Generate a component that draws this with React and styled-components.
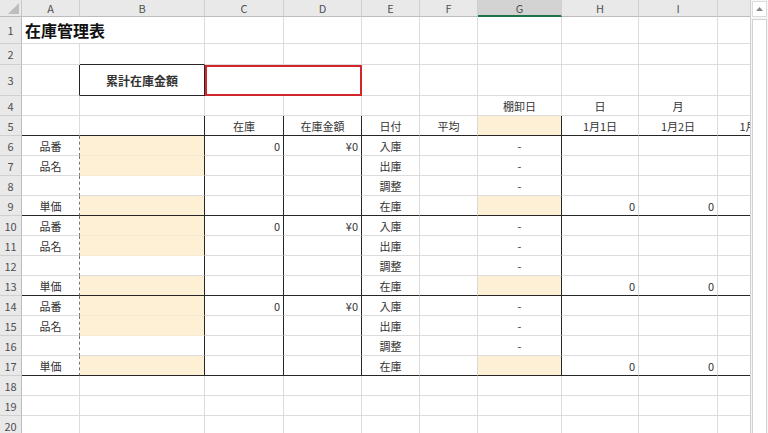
import React from 'react';
import styled, { createGlobalStyle } from 'styled-components';

const GlobalStyle = createGlobalStyle`
  html, body {
    margin: 0;
    padding: 0;
    background: #fff;
    overflow: hidden;
  }
  body {
    font-family: "Noto Sans CJK JP", "Noto Sans", sans-serif;
    color: #333;
  }
`;

// column widths as measured on the sheet; J is only partly in view
const COLS = [
  { key: 'A', w: 58 },
  { key: 'B', w: 125 },
  { key: 'C', w: 79 },
  { key: 'D', w: 78 },
  { key: 'E', w: 58 },
  { key: 'F', w: 58 },
  { key: 'G', w: 84 },
  { key: 'H', w: 77 },
  { key: 'I', w: 79 },
  { key: 'J', w: 78, clipped: true }
];
const ROW_H = { 1: 27, 2: 21, 3: 31 };
const ROWS = Array.from({ length: 20 }, (_, i) => i + 1);
const SELECTED_COL = 'G';

const GRID = '#dcdcdc';
const INK = '#262626';
const FILL = '#fdf0d5';

const Window = styled.div`
  display: flex;
  width: 768px;
  height: 433px;
  overflow: hidden;
`;

const Viewport = styled.div`
  width: 750px;
  height: 433px;
  overflow: hidden;
  flex: none;
`;

const Sheet = styled.div`
  display: grid;
  grid-template-columns: 22px ${COLS.map(c => c.w + 'px').join(' ')};
  grid-template-rows: 17px ${ROWS.map(r => (ROW_H[r] || 20) + 'px').join(' ')};
  width: max-content;
`;

const Corner = styled.div`
  position: relative;
  background: #e9e9e9;
  border-right: 1px solid #c8c8c8;
  border-bottom: 1px solid #bcbcbc;
  box-sizing: border-box;
  svg {
    position: absolute;
    right: 2px;
    bottom: 2px;
  }
`;

const ColHead = styled.div`
  display: flex;
  align-items: center;
  justify-content: center;
  box-sizing: border-box;
  background: ${p => (p.$active ? '#d3d3d3' : '#e9e9e9')};
  border-right: 1px solid #d0d0d0;
  border-bottom: ${p => (p.$active ? '2px solid #217346' : '1px solid #bcbcbc')};
  font-size: 11px;
  color: #505050;
`;

const RowHead = styled.div`
  display: flex;
  align-items: center;
  justify-content: center;
  box-sizing: border-box;
  background: #e9e9e9;
  border-right: 1px solid #bcbcbc;
  border-bottom: 1px solid #d0d0d0;
  font-size: 11px;
  color: #505050;
`;

const rightBorder = p => {
  if (p.$right === 'thick') return `1px solid ${INK}`;
  if (p.$right === 'dash') return '1px dashed #777';
  if (p.$right === 'red') return '2px solid #d3262c';
  return `1px solid ${p.$fill ? '#f3e6cb' : GRID}`;
};

const bottomBorder = p => {
  if (p.$bottom === 'thick') return `1px solid ${INK}`;
  if (p.$bottom === 'red') return '2px solid #d3262c';
  return `1px solid ${p.$fill ? '#f6ead2' : GRID}`;
};

const Cell = styled.div`
  display: flex;
  align-items: center;
  justify-content: ${p =>
    p.$align === 'right' ? 'flex-end' : p.$align === 'center' ? 'center' : 'flex-start'};
  grid-column: span ${p => p.$span || 1};
  box-sizing: border-box;
  padding: 0 3px;
  background: ${p => (p.$fill ? FILL : '#fff')};
  border-right: ${rightBorder};
  border-bottom: ${bottomBorder};
  box-shadow: ${p => p.$box || 'none'};
  font-size: ${p => (p.$title ? '16px' : p.$bold ? '12px' : '11px')};
  font-weight: ${p => (p.$title || p.$bold ? 700 : 400)};
  color: ${p => (p.$title ? '#111' : '#333')};
  white-space: nowrap;
  overflow: hidden;
`;

const Scrollbar = styled.div`
  flex: 1;
  display: flex;
  flex-direction: column;
  background: #f6f6f6;
  border-left: 1px solid #cfcfcf;
  padding: 0 1px;
`;

const ScrollButton = styled.div`
  height: 14px;
  display: flex;
  align-items: center;
  justify-content: center;
  background: #fff;
  border: 1px solid #dcdcdc;
  margin-top: 1px;
`;

const Thumb = styled.div`
  flex: 1;
  margin-top: 2px;
  background: #fff;
  border: 1px solid #d2d2d2;
  border-bottom: none;
`;

const BLOCK_A = ['品番', '品名', '', '単価'];
const BLOCK_E = ['入庫', '出庫', '調整', '在庫'];
const THICK_RIGHT = ['B', 'C', 'D', 'G'];
const DATES = { H: '1月1日', I: '1月2日', J: '1月3日' };
const DAYS = { H: '日', I: '月' };

function cellFor(row, col) {
  const spec = { text: '', align: 'left' };
  if (row >= 5 && row <= 17) {
    if (THICK_RIGHT.includes(col)) spec.right = 'thick';
    if (row >= 6 && col === 'A') spec.right = 'dash';
  }
  if (row === 5 || row === 9 || row === 13 || row === 17) spec.bottom = 'thick';

  if (row === 4) {
    if (col === 'G') Object.assign(spec, { text: '棚卸日', align: 'center' });
    if (DAYS[col]) Object.assign(spec, { text: DAYS[col], align: 'center' });
  }
  if (row === 5) {
    const head = { C: '在庫', D: '在庫金額', E: '日付', F: '平均' };
    if (head[col]) Object.assign(spec, { text: head[col], align: 'center' });
    if (DATES[col]) Object.assign(spec, { text: DATES[col], align: 'center' });
    if (col === 'G') spec.fill = true;
  }
  if (row >= 6 && row <= 17) {
    const pos = (row - 6) % 4;
    if (col === 'A') Object.assign(spec, { text: BLOCK_A[pos], align: 'center' });
    if (col === 'B' && pos !== 2) spec.fill = true;
    if (col === 'C' && pos === 0) Object.assign(spec, { text: '0', align: 'right' });
    if (col === 'D' && pos === 0) Object.assign(spec, { text: '¥0', align: 'right' });
    if (col === 'E') Object.assign(spec, { text: BLOCK_E[pos], align: 'center' });
    if (col === 'G') {
      if (pos < 3) Object.assign(spec, { text: '-', align: 'center' });
      else spec.fill = true;
    }
    if ((col === 'H' || col === 'I') && pos === 3) {
      Object.assign(spec, { text: '0', align: 'right' });
    }
  }
  return spec;
}

function SheetRow({ row }) {
  const cells = [];
  COLS.forEach(({ key }) => {
    if (row === 1 && key === 'B') return;
    if (row === 3 && key === 'D') return;

    if (row === 1 && key === 'A') {
      cells.push(
        <Cell key={key} $span={2} $title>
          在庫管理表
        </Cell>
      );
      return;
    }
    if (row === 2 && key === 'B') {
      cells.push(<Cell key={key} $bottom="thick" />);
      return;
    }
    if (row === 3 && key === 'A') {
      cells.push(<Cell key={key} $right="thick" />);
      return;
    }
    if (row === 3 && key === 'B') {
      cells.push(
        <Cell key={key} $align="center" $bold $right="thick" $bottom="thick">
          累計在庫金額
        </Cell>
      );
      return;
    }
    if (row === 3 && key === 'C') {
      cells.push(
        <Cell
          key={key}
          $span={2}
          $right="red"
          $bottom="red"
          $box="inset 2px 2px 0 #d3262c"
        />
      );
      return;
    }

    const spec = cellFor(row, key);
    cells.push(
      <Cell
        key={key}
        $align={spec.align}
        $fill={spec.fill}
        $right={spec.right}
        $bottom={spec.bottom}
      >
        {spec.text}
      </Cell>
    );
  });

  return (
    <>
      <RowHead>{row}</RowHead>
      {cells}
    </>
  );
}

export default function App() {
  return (
    <>
      <GlobalStyle />
      <Window>
        <Viewport>
          <Sheet>
            <Corner>
              <svg width="11" height="11" viewBox="0 0 11 11">
                <polygon points="11,0 11,11 0,11" fill="#bdbdbd" />
              </svg>
            </Corner>
            {COLS.map(c => (
              <ColHead key={c.key} $active={c.key === SELECTED_COL}>
                {c.clipped ? '' : c.key}
              </ColHead>
            ))}
            {ROWS.map(r => (
              <SheetRow key={r} row={r} />
            ))}
          </Sheet>
        </Viewport>
        <Scrollbar>
          <ScrollButton>
            <svg width="7" height="4" viewBox="0 0 7 4">
              <polygon points="3.5,0 7,4 0,4" fill="#8a8a8a" />
            </svg>
          </ScrollButton>
          <Thumb />
        </Scrollbar>
      </Window>
    </>
  );
}
